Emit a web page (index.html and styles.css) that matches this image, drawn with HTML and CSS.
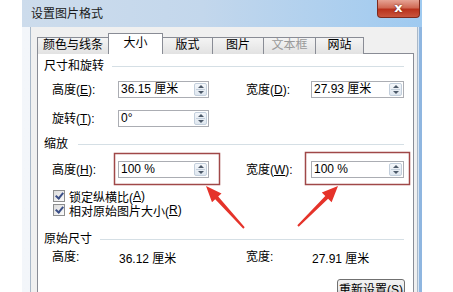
FILE: index.html
```html
<!DOCTYPE html>
<html lang="zh-CN">
<head>
    <meta charset="UTF-8">
    <title>设置图片格式</title>
    <link rel="stylesheet" href="styles.css">
</head>
<body>
    <div class="window">
        <div class="titlebar">
            <span class="title">设置图片格式</span>
            <span class="close">x</span>
        </div>
        <div class="frame">
            <div class="face">
                <div class="tabs">
                    <div class="tab w71">颜色与线条</div>
                    <div class="tab w54 active">大小</div>
                    <div class="tab w50">版式</div>
                    <div class="tab w51">图片</div>
                    <div class="tab w52 disabled">文本框</div>
                    <div class="tab w48">网站</div>
                </div>
                <div class="panel">
                    <div class="group-head"><span>尺寸和旋转</span></div>
                    <div class="grid first">
                        <label>高度(<u>E</u>):</label>
                        <div class="spin"><span>36.15 厘米</span><i class="arrows"></i></div>
                        <span></span>
                        <label>宽度(<u>D</u>):</label>
                        <div class="spin"><span>27.93 厘米</span><i class="arrows"></i></div>
                        <label>旋转(<u>T</u>):</label>
                        <div class="spin"><span>0°</span><i class="arrows"></i></div>
                    </div>

                    <div class="group-head scale"><span>缩放</span></div>
                    <div class="grid">
                        <label>高度(<u>H</u>):</label>
                        <div class="spin"><span>100 %</span><i class="arrows"></i></div>
                        <span></span>
                        <label>宽度(<u>W</u>):</label>
                        <div class="spin"><span>100 %</span><i class="arrows"></i></div>
                    </div>
                    <div class="checks">
                        <div class="check"><i class="box"></i>锁定纵横比(<u>A</u>)</div>
                        <div class="check"><i class="box"></i>相对原始图片大小(<u>R</u>)</div>
                    </div>

                    <div class="group-head orig"><span>原始尺寸</span></div>
                    <div class="grid plain">
                        <label>高度:</label>
                        <span class="value">36.12 厘米</span>
                        <span></span>
                        <label>宽度:</label>
                        <span class="value">27.91 厘米</span>
                    </div>
                    <div class="actions">
                        <button type="button">重新设置(<u>S</u>)</button>
                    </div>
                </div>
            </div>
        </div>
    </div>

    <!-- annotation layer: red boxes and arrows drawn over the dialog -->
    <svg class="marks" width="453" height="292" viewBox="0 0 453 292">
        <rect x="114.5" y="153.5" width="105" height="31" fill="none" stroke="#a04848" stroke-width="1.5"/>
        <rect x="305.5" y="152.5" width="104" height="32" fill="none" stroke="#a04848" stroke-width="1.5"/>
        <polygon fill="#e5332a" points="206,186 221.5,193.6 218.2,196.6 244.7,227.3 243.3,228.7 215.2,199.2 212,202.2"/>
        <polygon fill="#e5332a" points="338,186 331.6,202.2 328.1,198.7 298.7,226.7 297.3,225.3 325.3,195.9 321.8,192.4"/>
    </svg>
</body>
</html>
```

FILE: styles.css
```css
body {
    margin: 0;
    background-color: #fff;
    font-family: "Liberation Sans", "Noto Sans CJK SC", sans-serif;
    font-size: 12px;
    color: #000;
    width: 453px;
    height: 292px;
    overflow: hidden;
    position: relative;
}

u {
    text-decoration: underline;
}


.window {
    margin-left: 22px;
    width: 400px;
    height: 292px;
    display: flex;
    flex-direction: column;
    overflow: hidden;
}

.titlebar {
    height: 27px;
    flex: none;
    display: flex;
    justify-content: space-between;
    align-items: flex-start;
    background: linear-gradient(to right, #cddcec 0%, #c3d7ec 45%, #9fcaf0 100%);
}

.title {
    padding: 7px 0 0 9px;
    font-size: 12px;
    line-height: 15px;
    color: #1a1a1a;
}

.close {
    width: 41px;
    height: 17px;
    margin-right: 2px;
    border: 1px solid #7d2a1e;
    border-top: none;
    border-radius: 0 0 4px 4px;
    background: linear-gradient(#e6a394 0%, #d06a55 45%, #b9321d 55%, #c9553d 100%);
    color: #fff;
    font-family: "DejaVu Sans", sans-serif;
    font-weight: bold;
    font-size: 13px;
    line-height: 15px;
    text-align: center;
    text-shadow: 0 0 2px #5a1a10;
}


.frame {
    flex: 1;
    display: flex;
    padding: 0 4px 0 8px;
    background: linear-gradient(to right, #f3f6fa 0%, #eef3f8 60%, #d6e5f4 100%);
    border-right: 3px solid #8fb6e0;
}

.face {
    flex: 1;
    display: flex;
    flex-direction: column;
    background-color: #f0f0f0;
    border-left: 1px solid #a9b8c8;
    border-right: 1px solid #a9b8c8;
    padding: 7px 3px 0 6px;
}


.tabs {
    display: flex;
    align-items: flex-end;
    height: 20px;
    margin-bottom: -1px;
    position: relative;
    z-index: 1;
}

.tab {
    box-sizing: border-box;
    height: 17px;
    border: 1px solid #898c95;
    border-bottom: none;
    margin-right: -1px;
    background: linear-gradient(#f4f4f4, #e2e2e2);
    text-align: center;
    line-height: 15px;
}

.tab.active {
    height: 21px;
    background: #fff;
    line-height: 19px;
    position: relative;
    z-index: 2;
}

.tab.disabled {
    color: #9a9a9a;
}

.w71 { width: 72px; }
.w54 { width: 55px; }
.w50 { width: 51px; }
.w51 { width: 52px; }
.w52 { width: 53px; }
.w48 { width: 49px; }


.panel {
    flex: 1;
    background-color: #fff;
    border: 1px solid #898c95;
    padding: 5px 9px 0 6px;
}

.group-head {
    display: flex;
    align-items: center;
    height: 14px;
    line-height: 14px;
}

.group-head::after {
    content: "";
    flex: 1;
    border-top: 1px solid #d5dfe5;
    margin-left: 8px;
}

.group-head.scale::after {
    margin-left: 10px;
}

.group-head.scale {
    margin-top: 10px;
}

.group-head.orig {
    margin-top: 15px;
}


.grid {
    display: grid;
    grid-template-columns: 66px 91px 37px 65px 93px;
    grid-auto-rows: 17px;
    row-gap: 12px;
    align-items: center;
    padding-left: 8px;
    margin-top: 10px;
}

.grid.first {
    margin-top: 8px;
}

.grid label {
    line-height: 14px;
}

.grid.plain {
    grid-auto-rows: 14px;
    margin-top: 4px;
}

.value {
    padding-left: 1px;
}

.spin {
    box-sizing: border-box;
    height: 17px;
    border: 1px solid #abadb3;
    display: flex;
    align-items: center;
    justify-content: space-between;
    padding: 1px 1px 1px 2px;
    line-height: 13px;
}

.arrows {
    width: 13px;
    height: 13px;
    box-sizing: border-box;
    border: 1px solid #c3cfdc;
    border-radius: 2px;
    background:
        linear-gradient(#c3cfdc, #c3cfdc) center / 9px 1px no-repeat,
        linear-gradient(#f4f7fb, #dfe7ef);
    position: relative;
}

.arrows::before,
.arrows::after {
    content: "";
    position: absolute;
    left: 3px;
    border-left: 3px solid transparent;
    border-right: 3px solid transparent;
}

.arrows::before {
    top: 1px;
    border-bottom: 3px solid #4d5a6a;
}

.arrows::after {
    bottom: 1px;
    border-top: 3px solid #4d5a6a;
}


.checks {
    margin-top: 11px;
    padding-left: 9px;
}

.check {
    display: flex;
    align-items: center;
    height: 14px;
}

.box {
    box-sizing: border-box;
    width: 12px;
    height: 12px;
    margin-right: 4px;
    border: 1px solid #8e8f8f;
    background: linear-gradient(135deg, #dcdcdc, #fbfbfb);
    position: relative;
}

.box::after {
    content: "";
    position: absolute;
    left: 3px;
    top: 0px;
    width: 3px;
    height: 6px;
    border-right: 2px solid #3b4f87;
    border-bottom: 2px solid #3b4f87;
    transform: rotate(40deg);
}


.actions {
    display: flex;
    justify-content: flex-end;
    margin-top: 15px;
}

button {
    font-family: inherit;
    font-size: 12px;
    width: 68px;
    height: 22px;
    margin-right: -1px;
    padding: 0;
    border: 1px solid #707070;
    border-radius: 3px;
    background: linear-gradient(#f2f2f2 0%, #ebebeb 50%, #dddddd 51%, #cfcfcf 100%);
    color: #000;
    line-height: 18px;
}


.marks {
    position: absolute;
    left: 0;
    top: 0;
    pointer-events: none;
}
```
